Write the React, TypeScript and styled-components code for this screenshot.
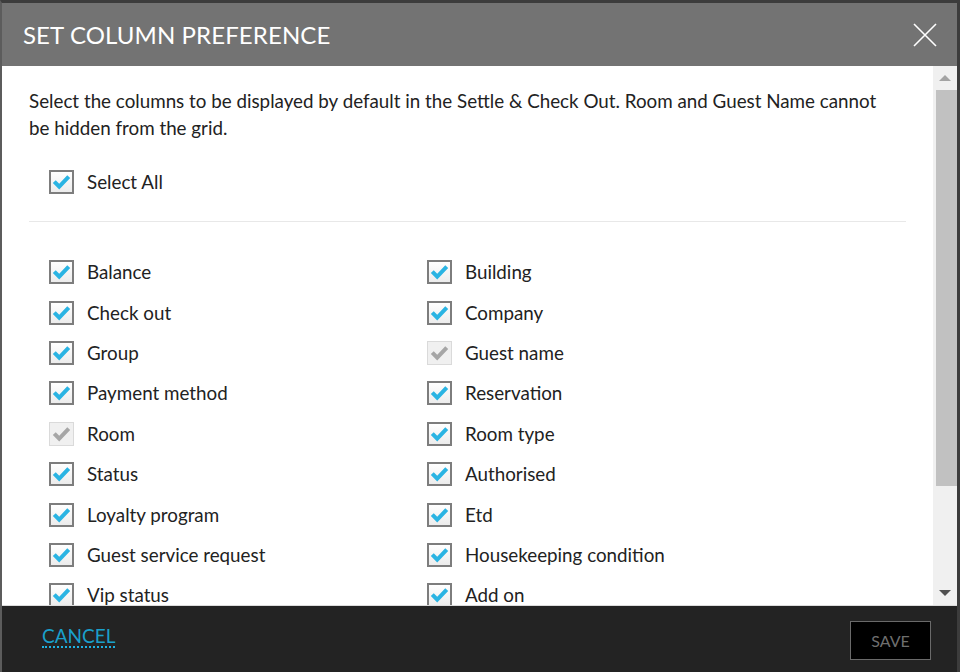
import styled, { createGlobalStyle } from "styled-components";

const GlobalStyle = createGlobalStyle`
  html, body {
    margin: 0;
    padding: 0;
    background: #3a3a3a;
  }
  * {
    box-sizing: border-box;
  }
`;

interface ColumnItem {
  label: string;
  locked?: boolean;
}

const leftColumns: ColumnItem[] = [
  { label: "Balance" },
  { label: "Check out" },
  { label: "Group" },
  { label: "Payment method" },
  { label: "Room", locked: true },
  { label: "Status" },
  { label: "Loyalty program" },
  { label: "Guest service request" },
  { label: "Vip status" },
];

const rightColumns: ColumnItem[] = [
  { label: "Building" },
  { label: "Company" },
  { label: "Guest name", locked: true },
  { label: "Reservation" },
  { label: "Room type" },
  { label: "Authorised" },
  { label: "Etd" },
  { label: "Housekeeping condition" },
  { label: "Add on" },
];

// interleave so the grid fills row by row
const gridItems: ColumnItem[] = leftColumns.flatMap((item, i) => [
  item,
  rightColumns[i],
]);

function CheckBox({ locked = false }: { locked?: boolean }) {
  return (
    <Box $locked={locked}>
      <svg width="19" height="17" viewBox="0 0 20 18">
        <path
          d="M0.8 9.6 L3.9 6.7 L7.6 10.3 L16.1 1.3 L19.2 4.2 L7.6 16.4 Z"
          fill={locked ? "#a6a6a6" : "#2ab4e3"}
        />
      </svg>
    </Box>
  );
}

export default function App() {
  return (
    <>
      <GlobalStyle />
      <Dialog>
        <Header>
          <Title>Set Column Preference</Title>
          <CloseBtn aria-label="close">
            <svg width="24" height="24" viewBox="0 0 24 24">
              <path
                d="M1 1 L23 23 M23 1 L1 23"
                stroke="#ffffff"
                strokeWidth="1.6"
                fill="none"
              />
            </svg>
          </CloseBtn>
        </Header>
        <Body>
          <Content>
            <Intro>
              Select the columns to be displayed by default in the Settle &amp;
              Check Out. Room and Guest Name cannot be hidden from the grid.
            </Intro>
            <SelectAllRow>
              <CheckBox />
              <Label>Select All</Label>
            </SelectAllRow>
            <Grid>
              {gridItems.map((item) => (
                <Item key={item.label}>
                  <CheckBox locked={item.locked} />
                  <Label>{item.label}</Label>
                </Item>
              ))}
            </Grid>
          </Content>
          <ScrollBar>
            <ScrollArrow $dir="up" $active={false} />
            <ScrollThumb />
            <ScrollSpacer />
            <ScrollArrow $dir="down" $active={true} />
          </ScrollBar>
        </Body>
        <Footer>
          <CancelLink>Cancel</CancelLink>
          <SaveBtn disabled>Save</SaveBtn>
        </Footer>
      </Dialog>
    </>
  );
}

const Dialog = styled.div`
  width: 960px;
  height: 672px;
  display: flex;
  flex-direction: column;
  border-top: 3px solid #3c3c3c;
  border-left: 2px solid #5c5c5c;
  border-right: 3px solid #3c3c3c;
  font-family: Lato, "Open Sans", "Liberation Sans", sans-serif;
  overflow: hidden;
`;

const Header = styled.div`
  height: 63px;
  flex: none;
  background: #737373;
  display: flex;
  align-items: center;
  justify-content: space-between;
  padding: 0 20px 0 21px;
`;

const Title = styled.h1`
  margin: 0;
  font-size: 24px;
  font-weight: 400;
  color: #ffffff;
  text-transform: uppercase;
  letter-spacing: 0.1px;
`;

const CloseBtn = styled.button`
  background: none;
  border: none;
  padding: 0;
  width: 24px;
  height: 24px;
  display: flex;
  cursor: pointer;
`;

const Body = styled.div`
  flex: 1;
  display: flex;
  min-height: 0;
  background: #ffffff;
  border-bottom: 1px solid #dcdcdc;
`;

const Content = styled.div`
  flex: 1;
  overflow: hidden;
  padding: 21px 27px 0 27px;
  color: #222222;
`;

const Intro = styled.p`
  margin: 0;
  padding-right: 16px;
  font-size: 18.8px;
  line-height: 27px;
`;

const SelectAllRow = styled.div`
  display: flex;
  align-items: center;
  gap: 13px;
  padding: 29px 0 27px 20px;
  border-bottom: 1px solid #e8e8e8;
`;

const Grid = styled.div`
  display: grid;
  grid-template-columns: 378px 1fr;
  grid-auto-rows: 40.4px;
  margin-top: 30px;
  padding-left: 20px;
`;

const Item = styled.div`
  display: flex;
  align-items: center;
  gap: 13px;
`;

const Label = styled.span`
  font-size: 18.8px;
  line-height: 24px;
  color: #222222;
`;

const Box = styled.span<{ $locked: boolean }>`
  flex: none;
  width: 25px;
  height: 24px;
  display: flex;
  align-items: center;
  justify-content: center;
  padding-top: 1px;
  border: ${(p) => (p.$locked ? "1px solid #dadada" : "2px solid #7d7d7d")};
  background: ${(p) =>
    p.$locked ? "#f0f0f0" : "linear-gradient(#ffffff, #ececec)"};
`;

const ScrollBar = styled.div`
  width: 24px;
  flex: none;
  background: #f0f0f0;
  display: flex;
  flex-direction: column;
  align-items: center;
`;

const ScrollArrow = styled.div<{ $dir: "up" | "down"; $active: boolean }>`
  width: 24px;
  height: 24px;
  flex: none;
  display: flex;
  align-items: center;
  justify-content: center;

  &::before {
    content: "";
    width: 0;
    height: 0;
    border-left: 6px solid transparent;
    border-right: 6px solid transparent;
    ${(p) =>
      p.$dir === "up"
        ? `border-bottom: 6px solid ${p.$active ? "#505050" : "#a3a3a3"};`
        : `border-top: 6px solid ${p.$active ? "#505050" : "#a3a3a3"};`}
  }
`;

const ScrollThumb = styled.div`
  width: 21px;
  height: 396px;
  margin-left: 2px;
  background: #c1c1c1;
  flex: none;
`;

const ScrollSpacer = styled.div`
  flex: 1;
`;

const Footer = styled.div`
  height: 66px;
  flex: none;
  background: #232323;
  display: flex;
  align-items: center;
  justify-content: space-between;
  padding: 0 26px 0 40px;
`;

const CancelLink = styled.a`
  font-size: 19px;
  color: #1aa0cb;
  text-transform: uppercase;
  text-decoration: none;
  border-bottom: 2px dotted #1fb1e2;
  line-height: 20px;
  margin-bottom: 4px;
  cursor: pointer;
`;

const SaveBtn = styled.button`
  width: 81px;
  height: 39px;
  background: #000000;
  border: 1px solid #6a6a6a;
  color: #6e6e6e;
  font-family: inherit;
  font-size: 16px;
  text-transform: uppercase;
  margin-top: 3px;
`;
